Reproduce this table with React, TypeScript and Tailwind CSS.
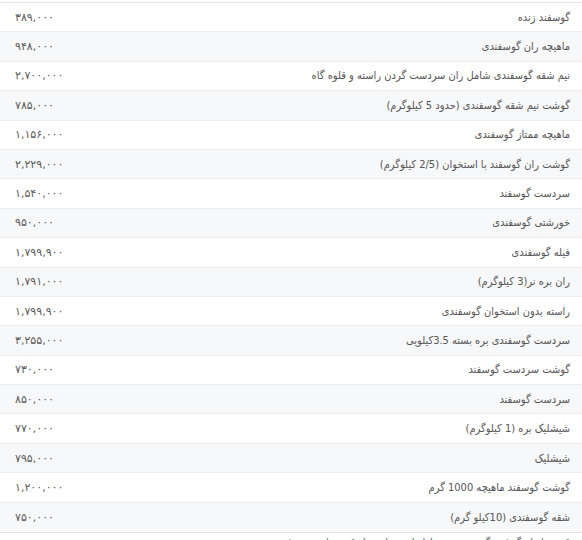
import React from "react";

const rows: [string, string][] = [
  ["گوسفند زنده", "۳۸۹,۰۰۰"],
  ["ماهیچه ران گوسفندی", "۹۴۸,۰۰۰"],
  ["نیم شقه گوسفندی شامل ران سردست گردن راسته و قلوه گاه", "۲,۷۰۰,۰۰۰"],
  ["گوشت نیم شقه گوسفندی (حدود 5 کیلوگرم)", "۷۸۵,۰۰۰"],
  ["ماهیچه ممتاز گوسفندی", "۱,۱۵۶,۰۰۰"],
  ["گوشت ران گوسفند با استخوان (2/5 کیلوگرم)", "۲,۲۲۹,۰۰۰"],
  ["سردست گوسفند", "۱,۵۴۰,۰۰۰"],
  ["خورشتی گوسفندی", "۹۵۰,۰۰۰"],
  ["فیله گوسفندی", "۱,۷۹۹,۹۰۰"],
  ["ران بره نر(3 کیلوگرم)", "۱,۷۹۱,۰۰۰"],
  ["راسته بدون استخوان گوسفندی", "۱,۷۹۹,۹۰۰"],
  ["سردست گوسفندی بره بسته 3.5کیلویی", "۳,۲۵۵,۰۰۰"],
  ["گوشت سردست گوسفند", "۷۳۰,۰۰۰"],
  ["سردست گوسفند", "۸۵۰,۰۰۰"],
  ["شیشلیک بره (1 کیلوگرم)", "۷۷۰,۰۰۰"],
  ["شیشلیک", "۷۹۵,۰۰۰"],
  ["گوشت گوسفند ماهیچه 1000 گرم", "۱,۲۰۰,۰۰۰"],
  ["شقه گوسفندی (10کیلو گرم)", "۷۵۰,۰۰۰"],
];

export default function App() {
  return (
    <div
      dir="rtl"
      className="w-[582px] h-[540px] overflow-hidden bg-white pt-[2px] text-[#555]"
      style={{ fontFamily: '"DejaVu Sans", sans-serif' }}
    >
      <div className="border-t border-b border-[#e3e3e3]">
        {rows.map(([name, price], i) => (
          <div
            key={i}
            className={`flex h-[29.4px] items-center justify-between border-b border-[#ededed] last:border-b-0 ${
              i % 2 === 1 ? "bg-[#f7f8f9]" : "bg-white"
            }`}
          >
            <div className="pr-[12px] text-[11px] leading-none font-['DejaVu_Sans_Condensed',sans-serif]">
              {name}
            </div>
            <div className="pl-[15px] text-[11px] leading-none text-[#5a5a5a]">{price}</div>
          </div>
        ))}
      </div>
      <div className="pr-[12px] pt-[2px] text-[11px] text-[#666] font-['DejaVu_Sans_Condensed',sans-serif]">
        قیمت انواع گوشت گوسفندی در بازار امروز | جدول قیمت | به روز شده
      </div>
    </div>
  );
}
